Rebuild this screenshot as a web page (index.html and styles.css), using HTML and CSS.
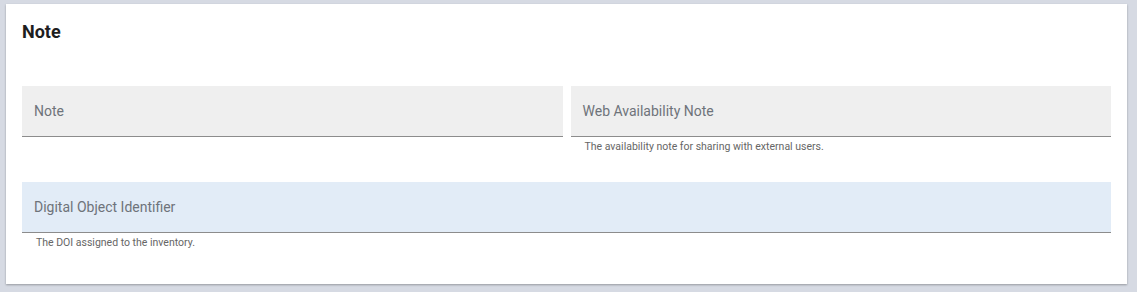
FILE: index.html
```html
<!DOCTYPE html>
<html lang="en">
<head>
    <meta charset="UTF-8">
    <title>Note</title>
    <link rel="stylesheet" href="styles.css">
</head>
<body>

<div class="card">
    <h2 class="card-title">Note</h2>

    <!-- Первая строка: две колонки -->
    <div class="row row-split">
        <div class="field-group">
            <div class="field"><span class="field-label">Note</span></div>
        </div>
        <div class="field-group">
            <div class="field"><span class="field-label">Web Availability Note</span></div>
            <div class="field-hint">The availability note for sharing with external users.</div>
        </div>
    </div>

    <!-- Вторая строка: одна колонка -->
    <div class="row">
        <div class="field-group">
            <div class="field field-focus"><span class="field-label">Digital Object Identifier</span></div>
            <div class="field-hint">The DOI assigned to the inventory.</div>
        </div>
    </div>
</div>

</body>
</html>
```

FILE: styles.css
```css
body { font-family: Roboto, "Liberation Sans", sans-serif; background-color: #d6dae3; margin: 0; padding: 4px 10px 8px 6px; }

.card {
    background-color: #fff;
    padding: 16px 16px 34px 16px;
    box-shadow: 0 1px 2px rgba(0, 0, 0, 0.3);
}
.card-title {
    margin: 0 0 42px 0;
    font-size: 18px;
    line-height: 24px;
    font-weight: 700;
    color: #1e1e1e;
}

.row { margin-bottom: 28px; }
.row:last-child { margin-bottom: 0; }
.row-split { display: grid; grid-template-columns: 1fr 1fr; gap: 8px; }

.field {
    height: 50px;
    display: flex;
    align-items: center;
    padding: 0 12px;
    background-color: #efefef;
    border-bottom: 1px solid #8c8c8c;
}
.field-focus { background-color: #e2ecf7; }
.field-label { font-size: 14px; color: #6e737a; }

.field-hint {
    padding: 3px 0 0 14px;
    font-size: 10.5px;
    line-height: 14px;
    color: #666;
}
```
